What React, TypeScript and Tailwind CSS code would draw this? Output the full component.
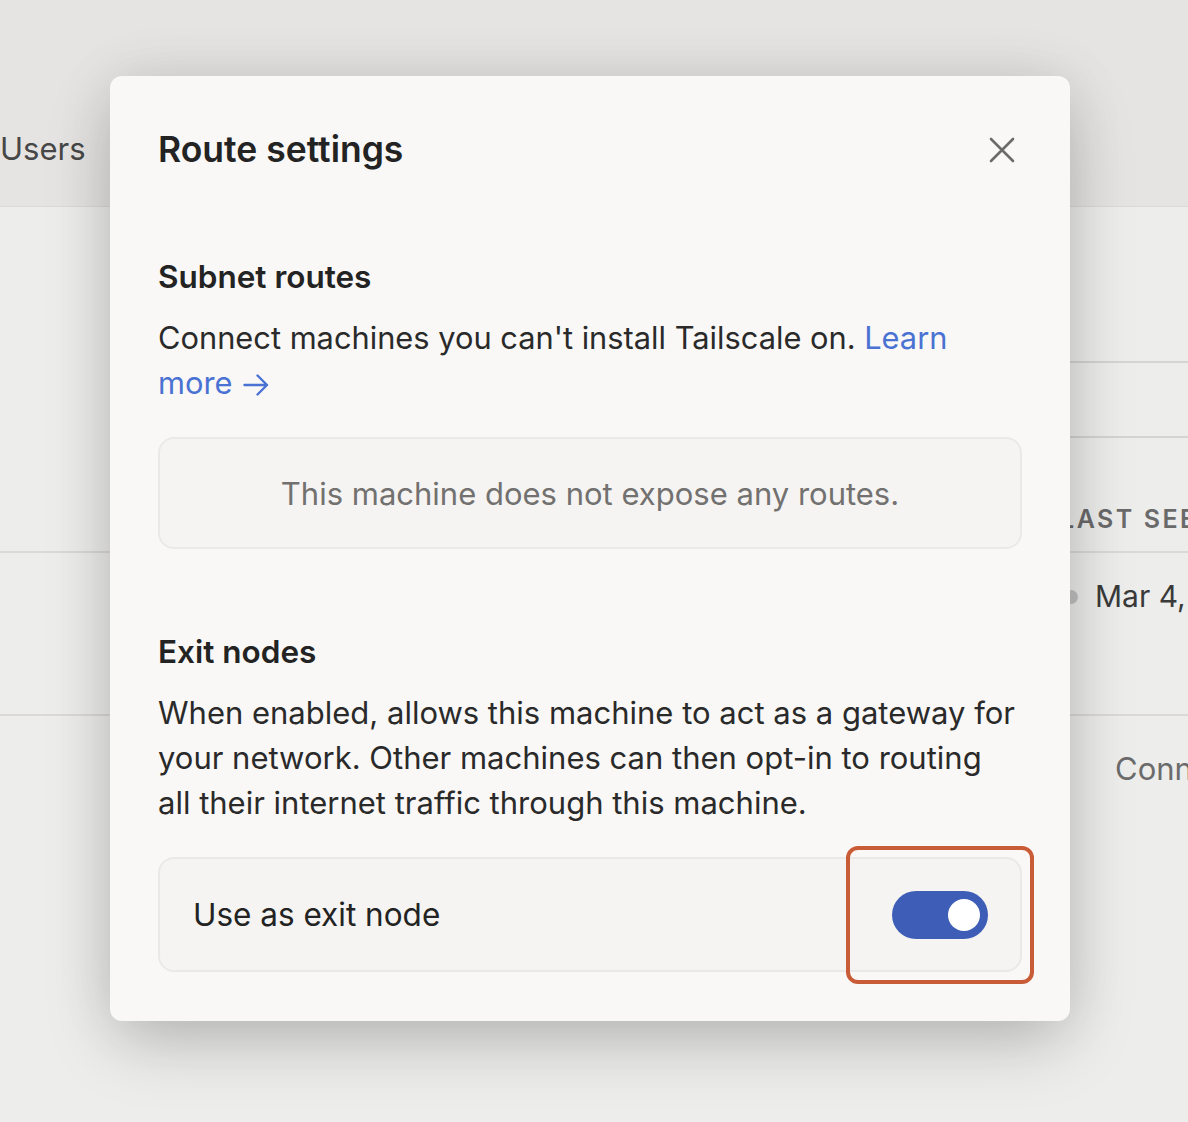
import React from "react";

function CloseIcon() {
  return (
    <svg width="26" height="26" viewBox="0 0 26 26" fill="none">
      <path d="M2 2L24 24M24 2L2 24" stroke="#6b6b6b" strokeWidth="2.6" strokeLinecap="round" />
    </svg>
  );
}

function ArrowIcon() {
  return (
    <svg width="26" height="22" viewBox="0 0 26 22" fill="none" className="inline-block align-[-2px] ml-[11px]">
      <path d="M1.5 11H24M14.5 1.5L24 11L14.5 20.5" stroke="#4a72d3" strokeWidth="2.4" strokeLinecap="round" strokeLinejoin="round" />
    </svg>
  );
}

export default function App() {
  return (
    <div className="relative w-[1188px] h-[1122px] overflow-hidden bg-[#ededec] font-['Inter',sans-serif]">
      {/* background page */}
      <div className="flex flex-col">
        <div className="h-[207px] bg-[#e5e4e2] border-b border-[#dcd9d8] flex items-start pt-[126px]">
          <span className="text-[31px] leading-[45px] text-[#474747]">Users</span>
        </div>
        <div className="h-[156px] ml-[700px] border-b-2 border-[#d6d4d3]" />
        <div className="h-[75px] ml-[700px] border-b-2 border-[#d6d4d3]" />
        <div className="h-[115px] border-b-2 border-[#dcd8d8] flex items-end pb-[17px] pl-[1060px]">
          <span className="text-[25px] font-semibold tracking-[0.1em] text-[#6a6a6a] whitespace-nowrap leading-[30px]">LAST SEEN</span>
        </div>
        <div className="h-[163px] border-b-2 border-[#dcd8d8] flex items-start pt-[21px] pl-[1064px] gap-[17px]">
          <span className="mt-[16px] w-[14px] h-[14px] rounded-full bg-[#c2c2c2] shrink-0" />
          <span className="text-[30px] leading-[45px] text-[#3a3a3a] whitespace-nowrap">Mar 4, 5:12 PM</span>
        </div>
        <div className="pt-[30px] pl-[1115px]">
          <span className="text-[31px] leading-[45px] text-[#6b6b6b] whitespace-nowrap">Connected</span>
        </div>
      </div>

      {/* modal */}
      <div className="absolute left-[110px] top-[76px] w-[960px] h-[945px] rounded-[12px] bg-[#f9f8f6] shadow-[0_24px_70px_-6px_rgba(0,0,0,0.22),0_0_60px_rgba(0,0,0,0.08)] px-[48px] pt-[52px] pb-[49px] flex flex-col">
        <div className="flex items-center justify-between h-[44px]">
          <h2 className="text-[35.5px] leading-[44px] font-semibold text-[#232323]">Route settings</h2>
          <button className="w-[40px] h-[40px] flex items-center justify-center">
            <CloseIcon />
          </button>
        </div>

        <h3 className="mt-[82px] text-[31.5px] leading-[45px] font-semibold text-[#232323]">Subnet routes</h3>
        <p className="mt-[16px] text-[30.8px] leading-[45px] text-[#2a2a2a]">
          Connect machines you can't install Tailscale on.{" "}
          <a className="text-[#4a72d3]">
            Learn
            <br />
            more
            <ArrowIcon />
          </a>
        </p>
        <div className="mt-[32px] h-[112px] rounded-[16px] border-2 border-[#ebe9e7] bg-[#f5f4f2] flex items-center justify-center">
          <span className="text-[31px] leading-[45px] text-[#727170]">This machine does not expose any routes.</span>
        </div>

        <h3 className="mt-[80px] text-[31.5px] leading-[45px] font-semibold text-[#232323]">Exit nodes</h3>
        <p className="mt-[16px] text-[31px] leading-[45px] text-[#2a2a2a]">
          When enabled, allows this machine to act as a gateway for your network. Other machines can then opt-in to routing all their internet traffic through this machine.
        </p>
        <div className="relative mt-[32px] h-[115px] rounded-[16px] border-2 border-[#ebe9e7] bg-[#f5f4f2] flex items-center justify-between pl-[33px] pr-[32px]">
          <span className="text-[31.5px] leading-[45px] text-[#232323]">Use as exit node</span>
          <div className="w-[96px] h-[48px] rounded-full bg-[#3d5db6] flex items-center justify-end pr-[8px]">
            <div className="w-[32px] h-[32px] rounded-full bg-white" />
          </div>
          <div className="absolute -top-[13px] -right-[14px] -bottom-[14px] w-[188px] rounded-[12px] border-[4px] border-[#c95b37]" />
        </div>
      </div>
    </div>
  );
}
